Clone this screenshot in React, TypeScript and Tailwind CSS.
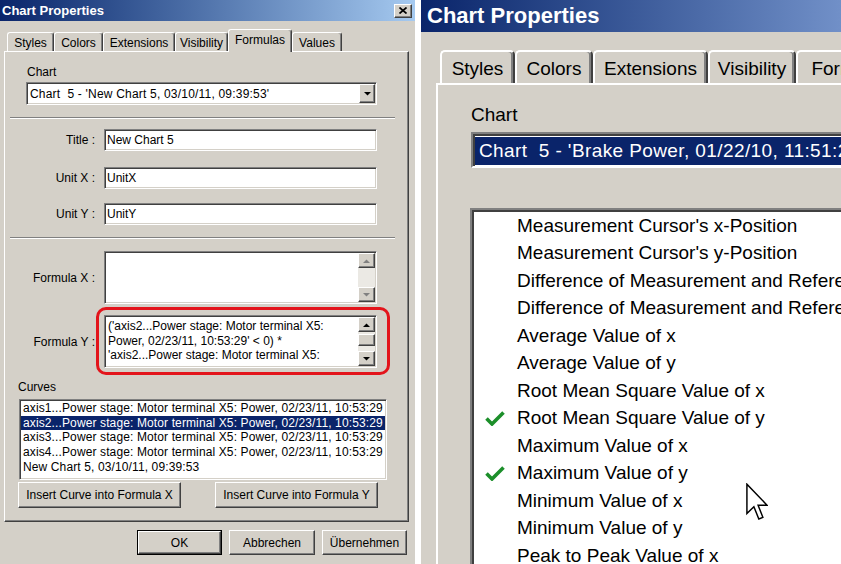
import React from "react";

// classic win9x 3d edges
const raised =
  "border border-t-white border-l-white border-r-[#404040] border-b-[#404040] shadow-[inset_-1px_-1px_0_#808080]";
const sunken =
  "border border-t-[#808080] border-l-[#808080] border-r-white border-b-white shadow-[inset_1px_1px_0_#404040,inset_-1px_-1px_0_#d4d0c8]";

function Arrow({ dir, disabled }: { dir: "up" | "down"; disabled?: boolean }) {
  const pts = dir === "up" ? "0,4 3.5,0.5 7,4" : "0,0 7,0 3.5,3.5";
  return (
    <svg width="7" height="4" viewBox="0 0 7 4">
      <polygon points={pts} fill={disabled ? "#808080" : "#000000"} />
    </svg>
  );
}

function ScrollBar({ disabled }: { disabled?: boolean }) {
  return (
    <div className="w-[17px] h-full flex flex-col bg-[#ebe9e4]">
      <div className={`h-[15px] shrink-0 bg-[#d4d0c8] flex items-center justify-center ${raised}`}>
        <Arrow dir="up" disabled={disabled} />
      </div>
      {disabled ? (
        <div className="flex-1" />
      ) : (
        <div className="flex-1 flex flex-col pt-[2px]">
          <div className={`h-[12px] bg-[#d4d0c8] ${raised}`} />
        </div>
      )}
      <div className={`h-[15px] shrink-0 bg-[#d4d0c8] flex items-center justify-center ${raised}`}>
        <Arrow dir="down" disabled={disabled} />
      </div>
    </div>
  );
}

function FieldRow({ label, value, className }: { label: string; value: string; className: string }) {
  return (
    <div className={`${className} flex items-center h-[22px]`}>
      <div className="w-[90px] text-right whitespace-pre">{label}</div>
      <div className={`ml-[9px] w-[273px] h-[22px] bg-white flex items-center pl-[2px] ${sunken}`}>{value}</div>
    </div>
  );
}

const leftTabs = [
  { label: "Styles", w: "w-[47px]" },
  { label: "Colors", w: "w-[49px]" },
  { label: "Extensions", w: "w-[72px]" },
  { label: "Visibility", w: "w-[53px]" },
  { label: "Formulas", w: "w-[64px]", active: true },
  { label: "Values", w: "w-[50px]" },
];

const curves = [
  "axis1...Power stage: Motor terminal X5: Power, 02/23/11, 10:53:29",
  "axis2...Power stage: Motor terminal X5: Power, 02/23/11, 10:53:29",
  "axis3...Power stage: Motor terminal X5: Power, 02/23/11, 10:53:29",
  "axis4...Power stage: Motor terminal X5: Power, 02/23/11, 10:53:29",
  "New Chart 5, 03/10/11, 09:39:53",
];

function LeftDialog() {
  return (
    <div className="w-[415px] h-full shrink-0 bg-[#d4d0c8] flex flex-col text-[12px] leading-[14px]">
      {/* title bar */}
      <div className="h-[21px] shrink-0 flex items-center justify-between pl-[2px] pr-[3px] bg-linear-to-r from-[#0a246a] to-[#a6caf0]">
        <span className="text-[13px] font-bold text-white">Chart Properties</span>
        <div className={`w-[18px] h-[14px] flex items-center justify-center bg-[#d4d0c8] ${raised}`}>
          <svg width="8" height="7" viewBox="0 0 8 7">
            <path d="M0.5 0.5 L7.5 6.5 M7.5 0.5 L0.5 6.5" stroke="#000" strokeWidth="1.7" />
          </svg>
        </div>
      </div>

      {/* tabs */}
      <div className="mt-[8px] h-[22px] pl-[7px] flex items-end shrink-0">
        {leftTabs.map((t) =>
          t.active ? (
            <div
              key={t.label}
              className={`${t.w} h-[23px] mb-[-1px] relative z-10 bg-[#d4d0c8] border-t border-l border-r border-t-white border-l-white border-r-[#404040] rounded-t-[3px] shadow-[inset_-1px_0_0_#808080] flex justify-center pt-[3px]`}
            >
              {t.label}
            </div>
          ) : (
            <div
              key={t.label}
              className={`${t.w} h-[19px] border-t border-l border-r border-t-white border-l-white border-r-[#404040] rounded-t-[3px] shadow-[inset_-1px_0_0_#808080] flex justify-center pt-[3px]`}
            >
              {t.label}
            </div>
          )
        )}
      </div>

      {/* tab page */}
      <div className="ml-[4px] w-[405px] h-[471px] shrink-0 flex flex-col border border-t-white border-l-white border-r-[#404040] border-b-[#404040] shadow-[inset_-1px_-1px_0_#808080]">
        <div className="mt-[13px] ml-[22px] h-[14px]">Chart</div>
        <div className={`mt-[3px] ml-[21px] w-[351px] h-[23px] bg-white flex items-center ${sunken}`}>
          <span className="flex-1 pl-[3px] whitespace-pre tracking-[0.2px]">Chart  5 - 'New Chart 5, 03/10/11, 09:39:53'</span>
          <div className={`w-[16px] h-[19px] bg-[#d4d0c8] flex items-center justify-center mr-[1px] ${raised}`}>
            <Arrow dir="down" />
          </div>
        </div>

        <div className="mt-[12px] ml-[5px] w-[385px] h-[2px] border-t border-t-[#808080] border-b border-b-white" />

        <FieldRow className="mt-[10px]" label="Title :" value="New Chart 5" />
        <FieldRow className="mt-[16px]" label="Unit X :" value="UnitX" />
        <FieldRow className="mt-[14px]" label="Unit Y :" value="UnitY" />

        <div className="mt-[12px] ml-[5px] w-[385px] h-[2px] border-t border-t-[#808080] border-b border-b-white" />

        <div className="mt-[12px] flex items-center h-[53px]">
          <div className="w-[90px] text-right">Formula X :</div>
          <div className={`ml-[9px] w-[273px] h-[53px] bg-white flex justify-end pr-[1px] py-[1px] ${sunken}`}>
            <ScrollBar disabled />
          </div>
        </div>

        <div className="mt-[11px] flex items-center h-[53px]">
          <div className="w-[90px] text-right">Formula Y :</div>
          <div className="ml-[9px] relative">
            <div className={`w-[273px] h-[53px] bg-white flex py-[1px] pr-[1px] ${sunken}`}>
              <div className="flex-1 pl-[3px] pt-[2px] leading-[14.5px] whitespace-nowrap overflow-hidden">
                <div>('axis2...Power stage: Motor terminal X5:</div>
                <div>Power, 02/23/11, 10:53:29' &lt; 0) *</div>
                <div>'axis2...Power stage: Motor terminal X5:</div>
              </div>
              <ScrollBar />
            </div>
            {/* red annotation frame */}
            <div className="absolute left-[-8px] top-[-8px] right-[-13px] bottom-[-7px] border-[3px] border-[#e3141b] rounded-[10px] pointer-events-none" />
          </div>
        </div>

        <div className="mt-[12px] ml-[13px] h-[14px]">Curves</div>
        <div className={`mt-[5px] ml-[14px] w-[368px] h-[81px] bg-white pt-[1px] px-[1px] overflow-hidden ${sunken}`}>
          {curves.map((c, i) => (
            <div
              key={c}
              className={`h-[14.7px] leading-[14.7px] pl-[2px] whitespace-nowrap tracking-[0.12px] ${i === 1 ? "bg-[#0a246a] text-white" : ""}`}
            >
              {c}
            </div>
          ))}
        </div>

        <div className="mt-[2px] ml-[13px] flex gap-[34px] h-[26px]">
          <div className={`w-[163px] h-[26px] flex items-center justify-center ${raised}`}>Insert Curve into Formula X</div>
          <div className={`w-[163px] h-[26px] flex items-center justify-center ${raised}`}>Insert Curve into Formula Y</div>
        </div>
      </div>

      {/* dialog buttons */}
      <div className="mt-[8px] pl-[137px] flex gap-[7px] h-[25px]">
        <div className="w-[85px] h-[25px] border border-black">
          <div className={`w-full h-full flex items-center justify-center ${raised}`}>OK</div>
        </div>
        <div className={`w-[86px] h-[25px] flex items-center justify-center ${raised}`}>Abbrechen</div>
        <div className={`w-[85px] h-[25px] flex items-center justify-center ${raised}`}>Übernehmen</div>
      </div>
    </div>
  );
}

const rightTabs = [
  { label: "Styles", w: "w-[75px]" },
  { label: "Colors", w: "w-[78px]" },
  { label: "Extensions", w: "w-[115px]" },
  { label: "Visibility", w: "w-[88px]" },
  { label: "Formulas", w: "w-[110px]" },
];

const items = [
  { t: "Measurement Cursor's x-Position" },
  { t: "Measurement Cursor's y-Position" },
  { t: "Difference of Measurement and Reference Cursor's x-Position" },
  { t: "Difference of Measurement and Reference Cursor's y-Position" },
  { t: "Average Value of x" },
  { t: "Average Value of y" },
  { t: "Root Mean Square Value of x" },
  { t: "Root Mean Square Value of y", on: true },
  { t: "Maximum Value of x" },
  { t: "Maximum Value of y", on: true },
  { t: "Minimum Value of x" },
  { t: "Minimum Value of y" },
  { t: "Peak to Peak Value of x" },
];

function RightDialog() {
  return (
    <div className="w-[420px] h-full shrink-0 bg-[#d4d0c8] flex flex-col overflow-hidden text-[19px] leading-[22px]">
      <div className="h-[32px] shrink-0 flex items-center pl-[6px] bg-linear-to-r from-[#0a246a] to-[#7190c8]">
        <span className="text-[22px] font-bold text-white whitespace-nowrap">Chart Properties</span>
      </div>

      <div className="mt-[18px] h-[33px] pl-[19px] flex items-end whitespace-nowrap shrink-0">
        {rightTabs.map((t) => (
          <div
            key={t.label}
            className={`${t.w} shrink-0 h-[33px] border-t-2 border-l-2 border-r-2 border-t-white border-l-white border-r-[#404040] rounded-t-[5px] shadow-[inset_-2px_0_0_#808080] flex justify-center pt-[6px] overflow-hidden`}
          >
            {t.label}
          </div>
        ))}
      </div>

      <div className="ml-[15px] flex-1 min-h-0 border-t-2 border-l-2 border-white flex flex-col">
        <div className="mt-[19px] ml-[33px]">Chart</div>
        <div className="mt-[6px] ml-[33px] w-[400px] h-[36px] shrink-0 bg-white pt-[3px] pl-[2px] pb-[1px] border-2 border-t-[#808080] border-l-[#808080] border-r-white border-b-white shadow-[inset_2px_2px_0_#404040]">
          <div className="h-full bg-[#0a246a] text-white flex items-center pl-[4px] whitespace-pre tracking-[0.4px]">
            Chart  5 - 'Brake Power, 01/22/10, 11:51:29'
          </div>
        </div>

        <div className="relative mt-[40px] ml-[32px] w-[400px] flex-1 min-h-0 bg-white pt-[2px] pl-[2px] overflow-hidden border-2 border-b-0 border-r-0 border-t-[#808080] border-l-[#808080] shadow-[inset_2px_2px_0_#404040]">
          {items.map((it) => (
            <div key={it.t} className="h-[27.5px] flex items-center whitespace-nowrap">
              <div className="w-[43px] shrink-0 pl-[11px] flex items-center">
                {it.on && (
                  <svg width="20" height="15" viewBox="0 0 20 15">
                    <path d="M1.5 7.5 L7 13 L18.5 1.5" fill="none" stroke="#1c8f2a" strokeWidth="3.6" />
                  </svg>
                )}
              </div>
              <span>{it.t}</span>
            </div>
          ))}
          {/* mouse pointer */}
          <svg className="absolute left-[274px] top-[273px]" width="22" height="39" viewBox="0 0 12 21">
            <path
              d="M0.5 0.5 L0.5 16.5 L4.3 12.8 L7 19.5 L9.2 18.6 L6.6 12 L11.5 12 Z"
              fill="#ffffff"
              stroke="#000000"
              strokeWidth="0.8"
              strokeLinejoin="miter"
            />
          </svg>
        </div>
      </div>
    </div>
  );
}

export default function App() {
  return (
    <div className="w-[841px] h-[564px] flex bg-white overflow-hidden font-['Liberation_Sans',Arial,sans-serif] text-black">
      <LeftDialog />
      <div className="w-[6px] shrink-0" />
      <RightDialog />
    </div>
  );
}
